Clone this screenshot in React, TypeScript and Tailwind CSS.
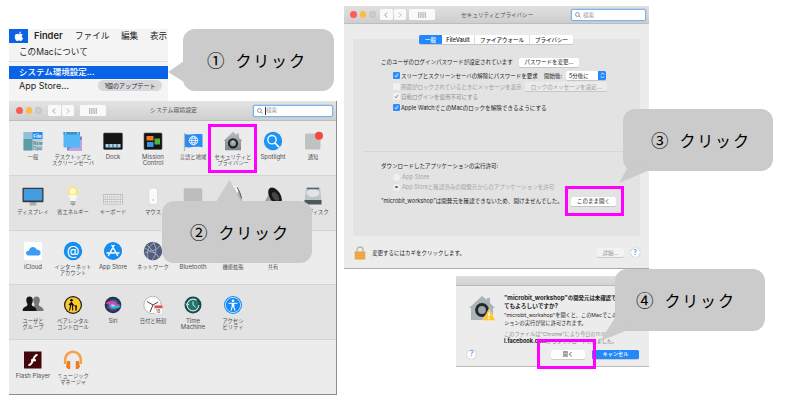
import React from 'react';

type Kids = { children?: React.ReactNode };

const Svg = ({ children }: Kids) => (
  <svg viewBox="0 0 20 20" className="block h-5 w-5 overflow-visible">
    {children}
  </svg>
);

const General = () => (
  <Svg>
    <rect x="0.5" y="1" width="19" height="18.5" rx="1" fill="#b4d3db" />
    <path d="M.5 1h9v7h-9z" fill="#8fc0dc" />
    <path d="M.5 8h9v11.500h-9z" fill="#5d9ca6" />
    <path d="M9.500 1h10v7h-10z" fill="#2588ef" />
    <text x="10.200" y="6.600" fontSize="5" fill="#fff" fontWeight="600">File</text>
    <text x="10" y="13.800" fontSize="4.500" fill="#46606b">New</text>
    <text x="10" y="19" fontSize="4.500" fill="#46606b">Ope</text>
  </Svg>
);
const Desktop = () => (
  <Svg>
    <rect x="4" y="5.500" width="15" height="14" fill="#8a78d0" />
    <path d="M4 19.500 19 8v11.500z" fill="#c3a0e4" />
    <rect x="0.500" y="1" width="16.500" height="15.500" rx="1" fill="#55b7f5" />
    <path d="M.5 1h16.500v2.500H.5z" fill="#3b8dcb" />
    <path d="M2 2.200h1.200M14 2.200h1.500" stroke="#fff" strokeWidth="1" />
  </Svg>
);
const Dock = () => (
  <Svg>
    <rect x="0.500" y="2" width="19" height="16.500" rx="1" fill="#151515" stroke="#555" strokeWidth=".6" />
    <path d="M2.500 13h15v3.500h-15z" fill="#a8d3ef" />
    <path d="M6 13v3.500M10 13v3.500M14 13v3.500" stroke="#24333d" strokeWidth=".8" />
  </Svg>
);
const Mission = () => (
  <Svg>
    <rect x="1" y="2" width="18" height="16.500" rx="1" fill="#151515" stroke="#555" strokeWidth=".6" />
    <path d="M3.500 5h7v4.500h-7z" fill="#ef7b25" />
    <path d="M4 11h6.500v5H4z" fill="#3c94e0" />
    <path d="M11.500 7.500H17v6h-5.500z" fill="#4bb340" />
  </Svg>
);
const Flag = () => (
  <Svg>
    <path d="M1.500 2v18" stroke="#b5b5b5" strokeWidth="1.200" />
    <path d="M2 3c4 1.500 9-1 17.500.3v13c-8-1.500-12 1-17.500-.3z" fill="#2a8cf0" />
    <g fill="none" stroke="#fff" strokeWidth=".8">
      <circle cx="10.500" cy="9.500" r="4.300" />
      <ellipse cx="10.500" cy="9.500" rx="1.900" ry="4.300" />
      <path d="M6.200 9.500h8.600M7 7.200h7M7 11.800h7" />
    </g>
  </Svg>
);
const House = () => (
  <Svg>
    <defs>
      <linearGradient id="house" x1="0" y1="0" x2="0" y2="1">
        <stop offset="0" stopColor="#b9bfc1" />
        <stop offset="1" stopColor="#7c8385" />
      </linearGradient>
    </defs>
    <path d="M10 .8 13.500 4V2.500H16v4l3.500 3.500h-1.500v9.300H2V10H.5z" fill="url(#house)" />
    <circle cx="10" cy="12.300" r="4.100" fill="#9a9fa1" stroke="#202326" strokeWidth="2.100" />
    <path d="M10 9.500v2.800" stroke="#d8d8d8" strokeWidth="1" />
  </Svg>
);
const Spotlight = () => (
  <Svg>
    <circle cx="10" cy="10" r="9.200" fill="#1b94f5" />
    <circle cx="9" cy="8.700" r="4.200" fill="none" stroke="#fff" strokeWidth="1.300" />
    <path d="m12 12 3.700 3.800" stroke="#fff" strokeWidth="1.700" strokeLinecap="round" />
  </Svg>
);
const Notice = () => (
  <Svg>
    <rect x="2" y="2.500" width="15.500" height="16" rx="1.500" fill="#bfc1c2" />
    <circle cx="16" cy="4.700" r="4" fill="#f4473e" />
  </Svg>
);
const Display = () => (
  <Svg>
    <path d="M7 16h6l.7 3.500H6.300z" fill="#adadad" />
    <rect x="-.500" y="1.700" width="21" height="14.500" rx=".8" fill="#343a40" />
    <path d="M.8 3h18.400v11.500H.8z" fill="#439be0" />
  </Svg>
);
const Bulb = () => (
  <Svg>
    <circle cx="10" cy="5.700" r="5.200" fill="#fbe76c" />
    <circle cx="9.700" cy="5.300" r="3" fill="#fffbd3" />
    <path d="M5.500 9h9l-2 6H7.500z" fill="#f7f7f4" />
    <path d="M7.700 15h4.600v3.500l-2.300 1.300-2.300-1.300z" fill="#a2a3a3" />
    <path d="M7.700 16.500h4.600" stroke="#ccc" strokeWidth=".8" />
  </Svg>
);
const Keyboard = () => (
  <Svg>
    <rect x="0" y="8" width="20" height="10.500" fill="#bdbdbd" />
    <g stroke="#f6f6f6" strokeWidth="1.500" strokeDasharray="1.500 .6">
      <path d="M.8 9.700h18.400M.8 12.100h18.400M.8 14.500h18.400M.8 16.900h18.400" />
    </g>
  </Svg>
);
const Mouse = () => (
  <Svg>
    <rect x="5.800" y="2" width="8.700" height="16.500" rx="3" fill="#fafafa" stroke="#d2d2d2" strokeWidth=".6" />
    <circle cx="10" cy="14" r=".8" fill="#b4b4b4" />
  </Svg>
);
const Trackpad = () => (
  <Svg>
    <rect x=".7" y="2.300" width="18.500" height="17" rx="1.500" fill="#bdbdbd" />
  </Svg>
);
const Printer = () => (
  <Svg>
    <path d="M8 0h7v20H3V9z" fill="#f6f6f6" />
    <path d="m11 1 3 7 2-4 3 9v7H9z" fill="#a9a9a9" />
    <path d="m14 1 3 6 1.500 5" stroke="#5f5f5f" strokeWidth="1" fill="none" />
  </Svg>
);
const Speaker = () => (
  <Svg>
    <path d="M2 15 9 3l8 15H4z" fill="#9fa0a2" />
    <ellipse cx="12" cy="10" rx="5.500" ry="9.500" transform="rotate(-32 12 10)" fill="#171819" />
    <ellipse cx="12.500" cy="10.500" rx="2.700" ry="5" transform="rotate(-32 12.500 10.500)" fill="#45484b" />
  </Svg>
);
const Disk = () => (
  <Svg>
    <path d="M3 1.500h14l1.500 14h-17z" fill="#bcc4c8" />
    <ellipse cx="10" cy="7" rx="6.500" ry="4" fill="#dfe5e7" />
    <path d="M1.500 14h17v4.500h-17z" fill="#4d565b" />
    <path d="M4 2.500h12" stroke="#56636a" strokeWidth="1.500" />
  </Svg>
);
const ICloud = () => (
  <Svg>
    <rect x="1" y="1" width="18" height="18" rx="1.500" fill="#fff" />
    <path d="M6 14.500c-4 0-3.800-5 0-4.700.3-4.500 6.500-5 7.700-1 4.500-1 5.500 5.700 1 5.700z" fill="#3d9bf1" />
  </Svg>
);
const AtSign = () => (
  <Svg>
    <circle cx="10" cy="10" r="9.200" fill="#178ff0" />
    <text x="10" y="14.300" textAnchor="middle" fontSize="13" fill="#fff">@</text>
  </Svg>
);
const AppStore = () => (
  <Svg>
    <circle cx="10" cy="10" r="9" fill="#168bf2" />
    <path d="m11 4.500-5.500 10M9 4.500l5.500 10M4 12h7.500M14 12h2" stroke="#fff" strokeWidth="1.500" strokeLinecap="round" />
  </Svg>
);
const Network = () => (
  <Svg>
    <circle cx="10" cy="10" r="9.200" fill="#515e7c" />
    <path d="M2 7c6 5 11 2 15-2M5 17C2 8 9 2 13 1.500M4 4l12 12M1.500 12c6-3 12 0 14 4M10 1c4 5 4 13-1 18" fill="none" stroke="#b0b8ca" strokeWidth=".8" />
  </Svg>
);
const Users = () => (
  <Svg>
    <path d="M13.500 1.500c4 0 4 5 2.200 7.500-.4 3 4.500 2.300 4.800 6V16H8v-1c.3-3.700 4.200-3 3.500-6-1.700-2.500-2-7.500 2-7.500z" fill="#777" />
    <path d="M6.500 1.500c4 0 4 5 2.200 7.500-.4 3 4.500 2.300 4.800 6V16H-.3v-1c.3-3.700 5.200-3 4.800-6-1.700-2.500-2-7.500 2-7.500z" fill="#161616" />
  </Svg>
);
const Parental = () => (
  <Svg>
    <circle cx="10" cy="10" r="9" fill="#191816" />
    <circle cx="10" cy="10" r="7.800" fill="#f9c92d" />
    <circle cx="8.500" cy="5.300" r="1.300" />
    <path d="m8.300 7.300-.8 4-1 4.200M8.500 7.300l1.100 4v4.200M6 10l2.400-2.500L11.500 11" fill="none" stroke="#111" strokeWidth="1.100" />
    <circle cx="13" cy="11.300" r="1" />
    <path d="M13 12v3.500" stroke="#111" strokeWidth="1.500" />
  </Svg>
);
const Siri = () => (
  <Svg>
    <defs>
      <radialGradient id="siri">
        <stop offset="0" stopColor="#dff" />
        <stop offset=".3" stopColor="#8d82d8" />
        <stop offset=".65" stopColor="#2c4774" />
        <stop offset="1" stopColor="#20233a" />
      </radialGradient>
    </defs>
    <circle cx="10" cy="10" r="8.300" fill="url(#siri)" />
    <path d="M2 9c7-7 9 2 16 0-5 3-10-1-16 0z" fill="#ed3f9b" />
    <path d="M3 12c6 3 9-4 15-1-4 4-7 2-15 1z" fill="#37b5da" />
  </Svg>
);
const Clock = () => (
  <Svg>
    <circle cx="9.500" cy="10" r="8.700" fill="#fcfcfa" stroke="#b7b7b7" strokeWidth="1" />
    <path d="M4 6.500 10 10l5-3M10 10l-3 7" fill="none" stroke="#333" strokeWidth=".9" />
    <rect x="11.500" y="10.500" width="8" height="8.500" rx=".6" fill="#fff" stroke="#ccc" strokeWidth=".4" />
    <path d="M11.500 10.500h8v2.700h-8z" fill="#e34d42" />
    <text x="12.700" y="18" fontSize="4.500" fill="#555">18</text>
  </Svg>
);
const TimeMachine = () => (
  <Svg>
    <circle cx="10" cy="10" r="8.500" fill="#164b49" />
    <circle cx="10" cy="10" r="5.900" fill="#23766f" stroke="#d5e4e1" strokeWidth="1.100" strokeDasharray="31 6" />
    <path d="M10 6.500V10l2.500 2M2.800 8.500l1.300 2 2-1.500" fill="none" stroke="#d5e4e1" strokeWidth="1" />
  </Svg>
);
const Access = () => (
  <Svg>
    <circle cx="10" cy="10" r="9" fill="#1689f1" />
    <circle cx="10" cy="10" r="7.600" fill="none" stroke="#fff" strokeWidth=".7" />
    <circle cx="10" cy="5.700" r="1.300" fill="#fff" />
    <path d="M5.500 8.200h9M10 7.700V12M9.200 8v4L8 15.500M10.800 8v4l1.200 3.500" stroke="#fff" strokeWidth="1.100" fill="none" />
  </Svg>
);
const Flash = () => (
  <Svg>
    <path d="M1 1.500h17.500v17H1z" fill="#43070b" />
    <path d="M14.500 5c-5-.4-4 10.500-9 10M8 10.300h5" fill="none" stroke="#fff" strokeWidth="2.100" />
  </Svg>
);
const Headphones = () => (
  <Svg>
    <path d="M2.200 14V9.500a7.800 7.800 0 0 1 15.600 0V14" fill="none" stroke="#f7a04c" strokeWidth="2.600" />
    <path d="M4.200 11h3v8H5l-2-2zM12.800 11h3l1.200 6-2 2h-2.200z" fill="#ee7b28" />
  </Svg>
);

type Item = [React.ReactNode, string, string?];

const ROWS: { box: string; items: Item[] }[] = [
  {
    box: 'h-[55px] bg-[#ececec] pt-[10px]',
    items: [
      [<General />, '一般'],
      [<Desktop />, 'デスクトップと', 'スクリーンセーバ'],
      [<Dock />, 'Dock'],
      [<Mission />, 'Mission', 'Control'],
      [<Flag />, '言語と地域'],
      [<House />, 'セキュリティと', 'プライバシー'],
      [<Spotlight />, 'Spotlight'],
      [<Notice />, '通知'],
    ],
  },
  {
    box: 'h-[55px] bg-[#e3e3e3] pt-[10px]',
    items: [
      [<Display />, 'ディスプレイ'],
      [<Bulb />, '省エネルギー'],
      [<Keyboard />, 'キーボード'],
      [<Mouse />, 'マウス'],
      [<Trackpad />, 'トラックパッド'],
      [<Printer />, 'プリンタ'],
      [<Speaker />, 'サウンド'],
      [<Disk />, '起動ディスク'],
    ],
  },
  {
    box: 'h-[54px] bg-[#ececec] pt-[10px]',
    items: [
      [<ICloud />, 'iCloud'],
      [<AtSign />, 'インターネット', 'アカウント'],
      [<AppStore />, 'App Store'],
      [<Network />, 'ネットワーク'],
      [null, 'Bluetooth'],
      [null, '機能拡張'],
      [null, '共有'],
    ],
  },
  {
    box: 'h-[55px] bg-[#e3e3e3] pt-[10px]',
    items: [
      [<Users />, 'ユーザと', 'グループ'],
      [<Parental />, 'ペアレンタル', 'コントロール'],
      [<Siri />, 'Siri'],
      [<Clock />, '日付と時刻'],
      [<TimeMachine />, 'Time', 'Machine'],
      [<Access />, 'アクセシ', 'ビリティ'],
    ],
  },
  {
    box: 'h-[55px] bg-[#ececec] pt-[10px]',
    items: [
      [<Flash />, 'Flash Player'],
      [<Headphones />, 'ミュージック', 'マネージャ'],
    ],
  },
];

const Lights = () => (
  <div className="flex gap-[3px]">
    <i className="size-[6.500px] rounded-full bg-[#fc5b57]" />
    <i className="size-[6.500px] rounded-full bg-[#fdbc40]" />
    <i className="size-[6.500px] rounded-full border border-[#c0c0c0] bg-[#cdcdcd]" />
  </div>
);

const NavButtons = () => (
  <div className="flex gap-px text-[#777]">
    <div className="flex h-[11px] w-[12.500px] items-center justify-center rounded-[1.500px] bg-[#f9f9f9]">
      <svg viewBox="0 0 6 8" className="h-[6px] w-[4px]"><path d="M5 .5 1 4l4 3.500" fill="none" stroke="currentColor" /></svg>
    </div>
    <div className="flex h-[11px] w-[12.500px] items-center justify-center rounded-[1.500px] bg-[#f9f9f9] text-[#aaa]">
      <svg viewBox="0 0 6 8" className="h-[6px] w-[4px]"><path d="M1 .5 5 4 1 7.500" fill="none" stroke="currentColor" /></svg>
    </div>
  </div>
);

const GridButton = () => (
  <div className="flex h-[11px] w-[26px] items-center justify-center rounded-[1.500px] bg-[#f9f9f9]">
    <svg viewBox="0 0 8 6" className="h-[6px] w-[8px]">
      <path d="M0 1h8M0 3h8M0 5h8" stroke="#777" strokeWidth="1.200" strokeDasharray="1.300 .9" />
    </svg>
  </div>
);

const Search = ({ caret }: { caret?: boolean }) => (
  <div className="flex h-3 w-full items-center rounded-[2px] border border-[#7fb3ea] bg-white pl-[3px] text-[5.500px] text-[#999] ring-[0.500px] ring-[#9cc4ef]">
    <svg viewBox="0 0 8 8" className="mr-[2px] size-[6px]" fill="none" stroke="#777">
      <circle cx="3.300" cy="3.300" r="2.600" />
      <path d="m5.300 5.300 2.300 2.300" />
    </svg>
    {caret && <i className="h-[8px] w-px bg-[#333]" />}
    検索
  </div>
);

const Button = ({ className, children }: Kids & { className: string }) => (
  <div className={'flex h-[9px] shrink-0 items-center justify-center rounded-[1.500px] shadow-[0_0.500px_0.500px_#aaa] ' + className}>
    {children}
  </div>
);

const Check = ({ on, dim }: { on?: boolean; dim?: boolean }) => (
  <i
    className={
      'flex size-[6.500px] shrink-0 items-center justify-center rounded-[1px] ' +
      (on && !dim ? 'bg-[#2f8ef7] text-white' : 'bg-[#f1f1f1] text-[#777]')
    }
  >
    {on && (
      <svg viewBox="0 0 6 6" className="size-[5px]"><path d="m1 3 1.500 1.700L5 1" fill="none" stroke="currentColor" /></svg>
    )}
  </i>
);

const Help = () => (
  <div className="flex size-[9px] items-center justify-center rounded-full bg-white text-[7px] text-[#2383ee] shadow-[0_0_1px_#888]">?</div>
);

const Callout = ({ place, pad, num, tail }: { place: string; pad: string; num: string; tail: React.ReactNode }) => (
  <div className={'absolute flex h-[62px] items-center rounded-[12px] bg-[#cbcbcb] ' + place + ' ' + pad}>
    <svg className="absolute left-0 top-0 h-[62px] w-[150px] overflow-visible" fill="#cbcbcb">{tail}</svg>
    <div className="relative flex items-center font-['Noto_Sans_CJK_JP',sans-serif] leading-none text-black">
      <span className="text-[17.500px]">{num}</span>
      <span className="ml-[11px] text-[16px] tracking-[1.800px]">クリック</span>
    </div>
  </div>
);

const AppMenu = () => (
  <div className="absolute left-[9px] top-[29px] flex h-[72px] w-[159px] flex-col overflow-hidden bg-[#f4f4f4] text-[8.600px] text-[#262626]">
    <div className="flex h-[14px] shrink-0 items-center">
      <div className="flex h-full w-[19px] items-center justify-center bg-[#0a63e6]">
        <svg viewBox="0 0 24 24" className="size-[10px]" fill="#fff">
          <path d="M17 1c.2 2.500-2.300 5-4.800 5C12 3.500 14.500 1.200 17 1zM21 8.500c-4 2.500-3 7.500 1 9C20.500 21 18.500 24 16 24c-1.700 0-2.200-1-4-1s-2.400 1-4 1C4.500 24 1 17.500 2 12c.8-5 5.500-6.500 8-5 1.600.8 2.500.8 4 0 2.300-1.200 5.500-.5 7 1.500z" />
        </svg>
      </div>
      <span className="ml-[6px] w-[41px] text-[9.300px] font-semibold">Finder</span>
      <span className="w-[46px]">ファイル</span>
      <span className="w-[29px]">編集</span>
      <span>表示</span>
    </div>
    <div className="flex h-[19px] shrink-0 items-center border-b border-[#dcdcdc] pl-[10px]">このMacについて</div>
    <div className="mt-[4px] flex h-[13px] shrink-0 items-center bg-[#0a63e6] pl-[10px] text-[8.500px] font-medium text-white">システム環境設定...</div>
    <div className="flex h-[13px] items-center pl-[10px]">
      <span className="w-[79px] text-[9px]">App Store...</span>
      <span className="flex h-[11px] w-[64px] items-center justify-center rounded-full bg-[#d8d8da] text-[6.100px]">1個のアップデート</span>
    </div>
  </div>
);

const Preferences = () => (
  <div className="absolute left-[9px] top-[101px] flex h-[294px] w-[328px] flex-col overflow-hidden border-b border-r border-[#8d8d8d] bg-[#ececec] text-[#505050]">
    <div className="flex h-5 shrink-0 items-center border-b border-[#bdbdbd] bg-linear-to-b from-[#e4e4e4] to-[#cfcfcf] pl-[7px]">
      <div className="w-[32px]"><Lights /></div>
      <div className="w-[32px]"><NavButtons /></div>
      <GridButton />
      <span className="ml-[44px] w-[103px] text-[5.900px]">システム環境設定</span>
      <div className="w-[80px]"><Search caret /></div>
    </div>
    {ROWS.map((row, i) => (
      <div key={i} className={'flex shrink-0 border-b border-[#d5d5d5] pl-[4px] ' + row.box}>
        {row.items.map(([icon, a, b]) => (
          <div key={a} className="flex w-10 shrink-0 flex-col items-center whitespace-nowrap text-[5.300px] leading-[6.500px]">
            <div className="mb-[2.500px] h-5">{icon}</div>
            <span className={a.charCodeAt(0) < 128 ? 'text-[6px]' : ''}>{a}</span>
            {b && <span className={b.charCodeAt(0) < 128 ? 'text-[6px]' : ''}>{b}</span>}
          </div>
        ))}
      </div>
    ))}
  </div>
);

const Security = () => (
  <div className="absolute left-[344px] top-[6px] flex h-[263px] w-[305px] flex-col overflow-hidden whitespace-nowrap border-b border-[#aaa] bg-[#ececec] text-[5.500px] leading-[8px] text-[#222]">
    <div className="flex h-[18px] shrink-0 items-center border-b border-[#bdbdbd] bg-linear-to-b from-[#e0e0e0] to-[#cecece] pl-[6px]">
      <div className="w-[30px]"><Lights /></div>
      <div className="w-[29px]"><NavButtons /></div>
      <GridButton />
      <span className="ml-[26px] w-[110px] text-[5.600px] text-[#555]">セキュリティとプライバシー</span>
      <div className="w-[75px]"><Search /></div>
    </div>
    <div className="mx-[9px] mt-[15px] flex h-[197px] shrink-0 flex-col bg-[#e3e3e3] px-[10px]">
      <div className="-mt-[4px] ml-[56px] flex h-[9px] w-[154px] shrink-0 rounded-[1.500px] bg-white text-[5.500px] font-medium shadow-[0_0.500px_0.500px_#aaa]">
        <span className="flex w-[23px] items-center justify-center rounded-l-[1.500px] bg-[#2389fa] text-white">一般</span>
        <span className="flex w-[32px] items-center justify-center text-[5.800px]">FileVault</span>
        <span className="flex w-[56px] items-center justify-center border-x border-[#ddd]">ファイアウォール</span>
        <span className="flex grow items-center justify-center">プライバシー</span>
      </div>
      <div className="mt-[13px] flex h-[10px] shrink-0 items-center pl-[18px]">
        <span className="w-[138px]">このユーザのログインパスワードが設定されています</span>
        <Button className="w-[60px] bg-white">パスワードを変更...</Button>
      </div>
      <div className="mt-[3.500px] flex h-[10px] shrink-0 items-center pl-[30px]">
        <Check on />
        <span className="ml-[1.500px] w-[143px] text-[5.500px]">スリープとスクリーンセーバの解除にパスワードを要求</span>
        <span className="w-[22px]">開始後:</span>
        <Button className="w-[40px] bg-white">
          <span className="grow pl-[3px]">5分後に</span>
          <span className="flex h-full w-[8px] items-center justify-center rounded-r-[1.500px] bg-[#2389fa]">
            <svg viewBox="0 0 6 8" className="h-[7px] w-[5px]" fill="none" stroke="#fff"><path d="m1 3 2-2 2 2M1 5l2 2 2-2" /></svg>
          </span>
        </Button>
      </div>
      <div className="mt-[1px] flex h-[10px] shrink-0 items-center pl-[30px] text-[#9a9a9a]">
        <Check />
        <span className="ml-[1.500px] w-[124px] text-[5.500px]">画面がロックされているときにメッセージを表示</span>
        <Button className="w-[82px] bg-[#ebebeb]">ロックのメッセージを設定...</Button>
      </div>
      <div className="flex h-[10px] shrink-0 items-center pl-[30px] text-[#8b8b8b]">
        <Check on dim />
        <span className="ml-[1.500px]">自動ログインを使用不可にする</span>
      </div>
      <div className="mt-[1px] flex h-[10px] shrink-0 items-center pl-[30px]">
        <Check on />
        <span className="ml-[1.500px] text-[5.600px]">Apple WatchでこのMacのロックを解除できるようにする</span>
      </div>
      <div className="mt-[38.500px] h-px shrink-0 bg-[#d6d6d6]" />
      <div className="mt-[8px] flex h-[11px] shrink-0 items-center pl-[18px] text-[5.500px]">ダウンロードしたアプリケーションの実行許可:</div>
      <div className="mt-[1px] flex h-[10px] shrink-0 items-center pl-[30px] text-[#a5a5a5]">
        <i className="mr-[2px] size-[7px] rounded-full bg-[#f0f0f0]" />
        <span className="text-[5.800px]">App Store</span>
      </div>
      <div className="flex h-[10px] shrink-0 items-center pl-[30px] text-[#a5a5a5]">
        <i className="mr-[2px] flex size-[7px] items-center justify-center rounded-full bg-[#f0f0f0]">
          <b className="size-[2.500px] rounded-full bg-[#666]" />
        </i>
        App Storeと確認済みの開発元からのアプリケーションを許可
      </div>
      <div className="mt-[4px] flex h-[10px] shrink-0 items-center pl-[18px]">
        <span className="w-[190px] text-[5.550px]">"microbit_workshop"は開発元を確認できないため、開けませんでした。</span>
        <Button className="w-[45px] bg-white">このまま開く</Button>
      </div>
    </div>
    <div className="flex h-[33px] shrink-0 items-center pl-[10px] text-[5.500px]">
      <svg viewBox="0 0 12 14" className="mr-[6px] h-[14px] w-[12px]">
        <path d="M3 7V4a3 3 0 0 1 6 0v3" fill="none" stroke="#b5b5b5" strokeWidth="1.300" />
        <rect x=".7" y="5.500" width="10.600" height="8" rx=".7" fill="#eba13c" />
        <path d="M1 8h10M1 11h10" stroke="#f3b55c" strokeWidth=".8" />
      </svg>
      <span className="w-[225px]">変更するにはカギをクリックします。</span>
      <Button className="mr-[6.500px] w-[27px] bg-[#f3f3f3] text-[#999]">詳細...</Button>
      <Help />
    </div>
  </div>
);

const OpenDialog = () => (
  <div className="absolute left-[456px] top-[276px] flex h-[91px] w-[193px] flex-col overflow-hidden whitespace-nowrap border-b border-[#bbb] bg-[#ececec] text-[5.200px] leading-[8px] text-[#222]">
    <div className="h-[10px] shrink-0 border-b border-[#bbb] bg-linear-to-b from-[#dedede] to-[#d2d2d2]" />
    <div className="flex h-[61px] shrink-0 pl-[12px]">
      <div className="mt-[9px] h-[28px] w-[36px]">
        <svg viewBox="0 0 28 28" className="size-[28px]">
          <path d="m14 1 5 4V3h3v5l5 5h-2v12H3V13H1z" fill="#a9b5b9" />
          <circle cx="14" cy="15" r="5.400" fill="#9ca7aa" stroke="#24282a" strokeWidth="3" />
          <path d="m21 14 6.500 11.500h-13z" fill="#ffc52d" stroke="#fff0ae" strokeWidth=".5" />
          <path d="M21 17.500v4M21 22.500V24" stroke="#fff" strokeWidth="1.500" />
        </svg>
      </div>
      <div className="pt-[8px]">
        <div className="text-[5.400px] font-bold"><span className="text-[6.100px]">"microbit_workshop"</span>の開発元は未確認で</div>
        <div className="text-[5.700px] font-bold">てもよろしいですか?</div>
        <div className="mt-[2px] leading-[7.500px]">"microbit_workshop"を開くと、このMacでこのア</div>
        <div className="leading-[7.500px]">ションの実行が常に許可されます。</div>
        <div className="mt-[4px] leading-[7px] text-[#8d8d8d]">このファイルは"Chrome"により今日の11:00に</div>
        <div className="text-[5px] leading-[7px] text-[#777]"><b className="text-[5.600px] text-[#222]">l.facebook.com</b>からダウンロードされました。</div>
      </div>
    </div>
    <div className="flex h-[14px] shrink-0 items-center pl-[11px]">
      <div className="w-[84px]"><Help /></div>
      <Button className="mr-[7px] w-[34px] bg-white">開く</Button>
      <Button className="w-[47px] bg-[#2389fa] font-medium text-white">キャンセル</Button>
    </div>
  </div>
);

export default function App() {
  return (
    <div className="relative h-[400px] w-[800px] overflow-hidden whitespace-nowrap bg-white font-['Inter','Noto_Sans_CJK_JP',sans-serif]">
      <AppMenu />
      <Preferences />
      <Security />
      <OpenDialog />
      <div className="absolute left-[208px] top-[124px] h-[49px] w-[49px] border-3 border-[#ff00ff]" />
      <Callout place="left-[183px] top-[29px] w-[151px]" pad="pl-[24px]" num="①" tail={<path d="M1 32-15 43 1 53z" />} />
      <Callout place="left-[162px] top-[201px] w-[150px]" pad="pl-[28px]" num="②" tail={<path d="M54 1 67.500-21 80 1z" />} />
      <Callout place="left-[623px] top-[109px] w-[150px]" pad="pl-[28px]" num="③" tail={<path d="M5 58-4 74 27 61 15 50z" />} />
      <Callout place="left-[615px] top-[269px] w-[150px]" pad="pl-[21px]" num="④" tail={<path d="M0 49-15 72 13 61 15 50z" />} />
      <div className="absolute left-[565px] top-[186px] h-[30px] w-[59px] border-3 border-[#ff00ff]" />
      <div className="absolute left-[537px] top-[339px] h-[30px] w-[59px] border-3 border-[#ff00ff]" />
    </div>
  );
}
